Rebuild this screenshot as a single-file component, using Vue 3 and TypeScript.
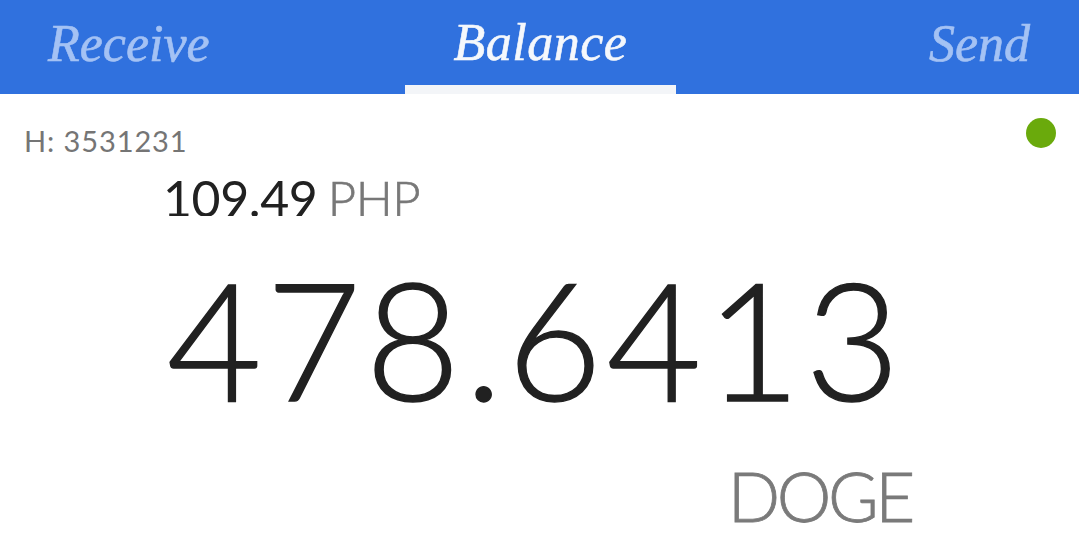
<template>
  <div class="screen">
    <nav class="tabs">
      <div
        v-for="tab in tabs"
        :key="tab"
        class="tab"
        :class="{ active: tab === current }"
      >
        {{ tab }}
      </div>
    </nav>
    <main class="balance">
      <span class="status-dot"></span>
      <p class="height">H: {{ height }}</p>
      <p class="fiat">{{ fiat }} <span class="unit">PHP</span></p>
      <p class="amount">{{ amount }}</p>
      <p class="coin">DOGE</p>
    </main>
  </div>
</template>

<script setup lang="ts">
const tabs = ['Receive', 'Balance', 'Send']
const current = 'Balance'
const height = 3531231
const fiat = '109.49'
const amount = '478.6413'
</script>

<style>
html,
body {
  margin: 0;
  background: #fff;
}
</style>

<style scoped>
.screen {
  width: 1079px;
  height: 551px;
  overflow: hidden;
  font-family: Lato, 'Liberation Sans', sans-serif;
  color: #212121;
}
.tabs {
  display: grid;
  grid-template-columns: 405px 271px 1fr;
  height: 94px;
  background: #3071de;
}
.tab {
  box-sizing: border-box;
  height: 94px;
  padding: 0 49px 7px 48px;
  display: flex;
  align-items: center;
  font-family: cursive;
  font-style: italic;
  font-size: 52px;
  -webkit-text-stroke: 0.6px currentColor;
  color: #a4c2f4;
}
.tab:last-child {
  justify-content: flex-end;
}
.tab.active {
  justify-content: center;
  padding: 0 0 1px;
  letter-spacing: 0.5px;
  color: #f5f8fc;
  border-bottom: 9px solid #f3f5f8;
}
.balance {
  position: relative;
  padding: 0 24px;
}
.status-dot {
  position: absolute;
  top: 24px;
  right: 23px;
  width: 30px;
  height: 30px;
  border-radius: 50%;
  background: #6aaa0c;
}
p {
  margin: 0;
}
.height {
  padding-top: 30px;
  font-size: 29px;
  line-height: 34px;
  letter-spacing: 0.9px;
  color: #757575;
}
.fiat {
  margin: 16px 0 0 139px;
  height: 42px;
  overflow: hidden;
  font-size: 50px;
  line-height: 48px;
  letter-spacing: -0.4px;
  word-spacing: -2px;
}
.unit {
  font-size: 49px;
  font-weight: 300;
  -webkit-text-stroke: 0.7px currentColor;
  color: #787878;
}
.amount {
  margin-top: 27px;
  padding-right: 8px;
  text-align: center;
  font-size: 164px;
  line-height: 190px;
  letter-spacing: 4.2px;
  font-weight: 300;
  -webkit-text-stroke: 1.4px currentColor;
}
.coin {
  margin: 21px 143px 0 0;
  text-align: right;
  font-size: 69px;
  line-height: 84px;
  letter-spacing: -3.4px;
  font-weight: 300;
  -webkit-text-stroke: 0.8px currentColor;
  color: #7a7a7a;
}
</style>
